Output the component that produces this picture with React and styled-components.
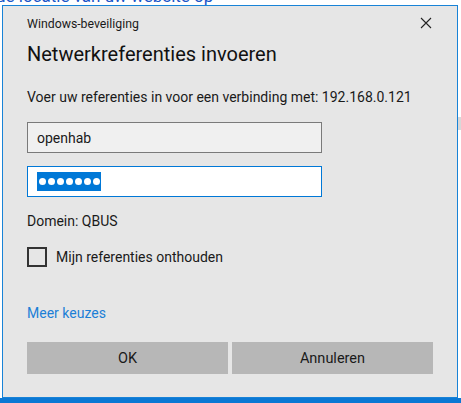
import React from 'react';
import styled, { createGlobalStyle } from 'styled-components';

const GlobalStyle = createGlobalStyle`
  html, body {
    margin: 0;
    padding: 0;
    background: #ffffff;
    overflow: hidden;
  }
`;

const Desktop = styled.div`
  position: relative;
  width: 461px;
  height: 403px;
  overflow: hidden;
  background: #ffffff;
  font-family: Roboto, 'Open Sans', sans-serif;
`;

const PageLink = styled.div`
  position: absolute;
  left: -4px;
  top: -14px;
  font-size: 17px;
  color: #1a56c9;
  white-space: nowrap;
`;

// strip of the web page that peeks out on the right of the dialog
const PageEdge = styled.div`
  position: absolute;
  right: 0;
  top: 117px;
  width: 4px;
  height: 13px;
  background: #d8d8d8;
`;

const Taskbar = styled.div`
  position: absolute;
  left: 0;
  right: 0;
  bottom: 0;
  height: 5px;
  background: #0b78d4;
`;

const Window = styled.div`
  position: absolute;
  left: 2px;
  top: 5px;
  width: 456px;
  height: 393px;
  box-sizing: border-box;
  border: 1px solid #1883d7;
  background: #e6e6e6;
  color: #1a1a1a;
  display: flex;
  flex-direction: column;
  padding: 0 23px 0 24px;
`;

const TitleBar = styled.div`
  display: flex;
  align-items: center;
  justify-content: space-between;
  height: 34px;
`;

const Caption = styled.span`
  font-size: 12.3px;
  color: #1a1a1a;
  padding-top: 1px;
`;

const CloseButton = styled.button`
  border: 0;
  background: none;
  padding: 0;
  margin-right: 2px;
  width: 12px;
  height: 12px;
  display: flex;
  cursor: pointer;
`;

const Heading = styled.h1`
  margin: 0;
  font-size: 20px;
  font-weight: 400;
  line-height: 28px;
  color: #111;
`;

const Text = styled.p`
  margin: ${(p) => p.$m || '0'};
  font-size: 14px;
  line-height: 20px;
  color: #1a1a1a;
`;

const Field = styled.div`
  width: 295px;
  height: 31px;
  box-sizing: border-box;
  border: 1px solid ${(p) => (p.$focus ? '#0078d7' : '#7a7a7a')};
  background: ${(p) => (p.$focus ? '#ffffff' : '#f0f0f0')};
  display: flex;
  align-items: center;
  padding-left: 9px;
  font-size: 14px;
  margin-top: ${(p) => p.$mt || '0'};
`;

const Selection = styled.span`
  background: #0078d7;
  display: flex;
  align-items: center;
  gap: 1px;
  height: 19px;
  padding: 0 1px;
`;

const Dot = styled.span`
  width: 7px;
  height: 7px;
  border-radius: 50%;
  background: #ffffff;
  margin: 0 0.5px;
`;

const CheckRow = styled.label`
  display: flex;
  align-items: center;
  gap: 9px;
  margin-top: 16px;
  font-size: 14px;
`;

const Box = styled.span`
  width: 20px;
  height: 20px;
  box-sizing: border-box;
  border: 2px solid #333;
  background: #e6e6e6;
`;

const MoreLink = styled.a`
  margin-top: 36px;
  font-size: 14px;
  line-height: 20px;
  color: #1c7fd6;
  text-decoration: none;
  align-self: flex-start;
`;

const Buttons = styled.div`
  display: grid;
  grid-template-columns: 201px 201px;
  gap: 4px;
  margin-top: 19px;
`;

const Button = styled.button`
  height: 32px;
  border: 0;
  background: #b7b7b7;
  font-family: inherit;
  font-size: 14.5px;
  color: #1a1a1a;
`;

function CloseIcon() {
  return (
    <svg width="12" height="12" viewBox="0 0 12 12">
      <path d="M1 1 L11 11 M11 1 L1 11" stroke="#222" strokeWidth="1.1" fill="none" />
    </svg>
  );
}

export default function App() {
  return (
    <Desktop>
      <GlobalStyle />
      <PageLink>de locatie van uw website op</PageLink>
      <PageEdge />
      <Window>
        <TitleBar>
          <Caption>Windows-beveiliging</Caption>
          <CloseButton aria-label="Sluiten">
            <CloseIcon />
          </CloseButton>
        </TitleBar>
        <Heading>Netwerkreferenties invoeren</Heading>
        <Text $m="19px 0 0">Voer uw referenties in voor een verbinding met: 192.168.0.121</Text>
        <Field $mt="15px">openhab</Field>
        <Field $mt="13px" $focus>
          <Selection>
            {Array.from({ length: 7 }).map((_, i) => (
              <Dot key={i} />
            ))}
          </Selection>
        </Field>
        <Text $m="14px 0 0">Domein: QBUS</Text>
        <CheckRow>
          <Box />
          Mijn referenties onthouden
        </CheckRow>
        <MoreLink href="#">Meer keuzes</MoreLink>
        <Buttons>
          <Button>OK</Button>
          <Button>Annuleren</Button>
        </Buttons>
      </Window>
      <Taskbar />
    </Desktop>
  );
}
